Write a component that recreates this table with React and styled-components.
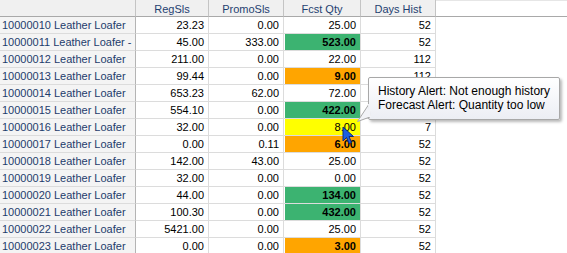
import React from 'react';
import styled, { createGlobalStyle } from 'styled-components';

// days hist for rows 5 and 6 sit under the tooltip
const rows = [
  ['10000010 Leather Loafer', '23.23', '0.00', '25.00', '', '52'],
  ['10000011 Leather Loafer -', '45.00', '333.00', '523.00', 'green', '52'],
  ['10000012 Leather Loafer', '211.00', '0.00', '22.00', '', '112'],
  ['10000013 Leather Loafer', '99.44', '0.00', '9.00', 'orange', '112'],
  ['10000014 Leather Loafer', '653.23', '62.00', '72.00', '', ''],
  ['10000015 Leather Loafer', '554.10', '0.00', '422.00', 'green', ''],
  ['10000016 Leather Loafer', '32.00', '0.00', '8.00', 'yellow', '7'],
  ['10000017 Leather Loafer', '0.00', '0.11', '6.00', 'orange', '52'],
  ['10000018 Leather Loafer', '142.00', '43.00', '25.00', '', '52'],
  ['10000019 Leather Loafer', '32.00', '0.00', '0.00', '', '52'],
  ['10000020 Leather Loafer', '44.00', '0.00', '134.00', 'green', '52'],
  ['10000021 Leather Loafer', '100.30', '0.00', '432.00', 'green', '52'],
  ['10000022 Leather Loafer', '5421.00', '0.00', '25.00', '', '52'],
  ['10000023 Leather Loafer', '0.00', '0.00', '3.00', 'orange', '52'],
];

const fills = {
  green: '#3cb371',
  orange: '#ffa500',
  yellow: '#ffff00',
};

function App() {
  return (
    <>
      <GlobalStyle />
      <Page>
        <Grid>
          <HeadCell />
          <HeadCell>RegSls</HeadCell>
          <HeadCell>PromoSls</HeadCell>
          <HeadCell>Fcst Qty</HeadCell>
          <HeadCell>Days Hist</HeadCell>
          <HeadFiller />
          {rows.map(r => (
            <React.Fragment key={r[0]}>
              <NameCell>{r[0]}</NameCell>
              <NumCell>{r[1]}</NumCell>
              <NumCell>{r[2]}</NumCell>
              <QtyCell>
                <Fill $fill={fills[r[4]]} $bold={r[4] === 'green' || r[4] === 'orange'}>
                  {r[3]}
                </Fill>
              </QtyCell>
              <NumCell>{r[5]}</NumCell>
              <Blank />
            </React.Fragment>
          ))}
        </Grid>

        <Tail width="20" height="22" viewBox="0 0 20 22">
          <polygon points="13,0 1.5,17.5 14,13" fill="#f2f3f7" stroke="#a8a8a8" strokeWidth="1" />
          <line x1="13" y1="0" x2="14" y2="13" stroke="#f2f3f7" strokeWidth="2" />
        </Tail>
        <Tooltip>
          <div>History Alert: Not enough history</div>
          <div>Forecast Alert: Quantity too low</div>
        </Tooltip>

        <Cursor width="13" height="20" viewBox="0 0 13 20">
          <path
            d="M1 1 L1 15 L4.5 11.5 L7 17.5 L9.5 16.5 L7 10.5 L11.5 10.5 Z"
            fill="#1d5fe0"
            stroke="#0a2a7a"
            strokeWidth="1"
            strokeLinejoin="round"
          />
        </Cursor>
      </Page>
    </>
  );
}

export default App;

const GlobalStyle = createGlobalStyle`
  body {
    margin: 0;
    background: #fff;
    font-family: "Liberation Sans", Arial, sans-serif;
  }
`;

const Page = styled.div`
  position: relative;
  width: 567px;
  height: 253px;
  overflow: hidden;
  background: #fff;
`;

const Grid = styled.div`
  display: grid;
  grid-template-columns: 136px 73px 75px 77px 75px 1fr;
  grid-auto-rows: 17px;
  font-size: 11px;
`;

const HeadCell = styled.div`
  box-sizing: border-box;
  display: flex;
  align-items: center;
  justify-content: center;
  background: #f0f0f0;
  border-right: 1px solid #c4c4c4;
  border-bottom: 1px solid #a9a9a9;
  color: #1f3f70;
  padding-top: 1px;
`;

const HeadFiller = styled.div`
  box-sizing: border-box;
  background: #fff;
  border-top: 1px solid #e6e6e6;
  border-bottom: 1px solid #a9a9a9;
`;

const NameCell = styled.div`
  box-sizing: border-box;
  display: flex;
  align-items: center;
  padding-left: 2px;
  background: #f4f4f4;
  border-right: 1px solid #b4b4b4;
  border-bottom: 1px solid #dcdcdc;
  color: #1e3c6c;
  white-space: nowrap;
`;

const NumCell = styled.div`
  box-sizing: border-box;
  display: flex;
  align-items: center;
  justify-content: flex-end;
  padding-right: 4px;
  border-right: 1px solid #dcdcdc;
  border-bottom: 1px solid #dcdcdc;
  color: #000;
`;

const QtyCell = styled.div`
  box-sizing: border-box;
  display: flex;
  border-right: 1px solid #dcdcdc;
  border-bottom: 1px solid #dcdcdc;
  color: #000;
`;

const Fill = styled.div`
  flex: 1;
  display: flex;
  align-items: center;
  justify-content: flex-end;
  padding-right: 4px;
  margin-left: ${props => (props.$fill ? '1px' : '0')};
  background: ${props => props.$fill || 'transparent'};
  font-weight: ${props => (props.$bold ? 'bold' : 'normal')};
`;

const Blank = styled.div`
  background: #fff;
`;

const Tooltip = styled.div`
  position: absolute;
  left: 368px;
  top: 77px;
  width: 192px;
  height: 43px;
  box-sizing: border-box;
  padding: 6px 0 0 9px;
  border: 1px solid #a8a8a8;
  border-radius: 2px;
  background: linear-gradient(#ffffff, #eceef4);
  box-shadow: 2px 2px 3px rgba(0, 0, 0, 0.28);
  font-size: 12px;
  line-height: 14px;
  color: #000;
  white-space: nowrap;
`;

const Tail = styled.svg`
  position: absolute;
  left: 356px;
  top: 104px;
  z-index: 2;
`;

const Cursor = styled.svg`
  position: absolute;
  left: 342px;
  top: 126px;
  z-index: 3;
`;
